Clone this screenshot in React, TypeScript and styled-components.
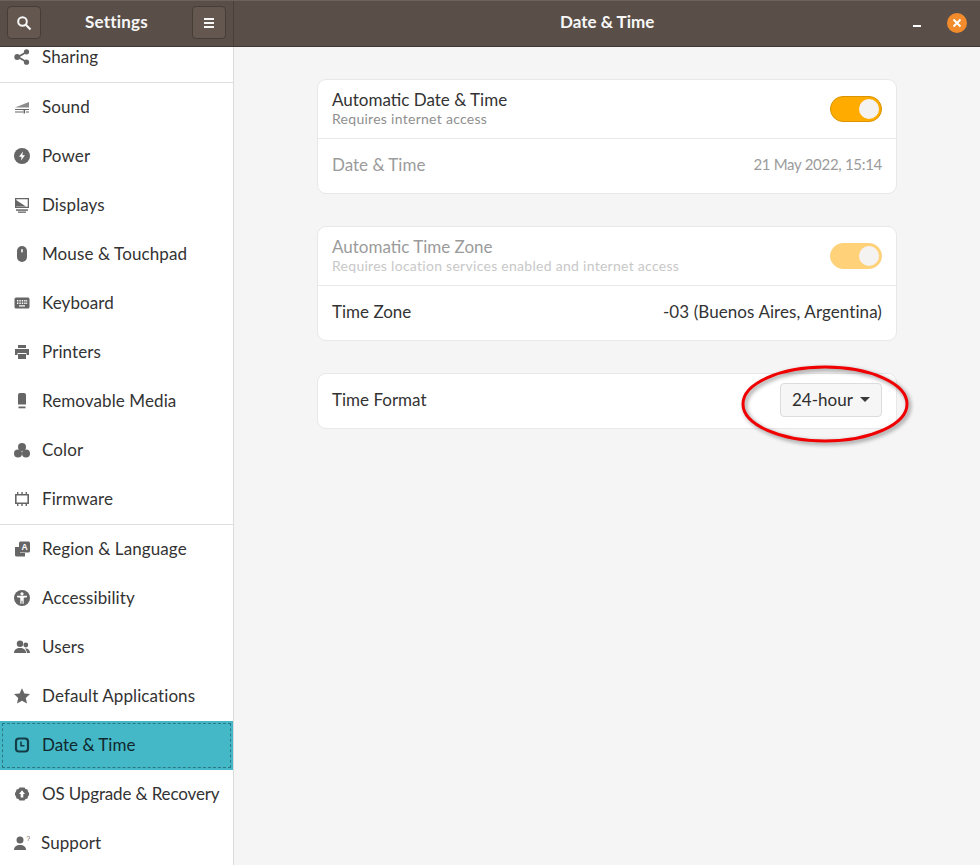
import React from "react";
import styled, { createGlobalStyle } from "styled-components";

const FONT = `"Lato", "Noto Sans", sans-serif`;
const ICON = "#666666";

const GlobalStyle = createGlobalStyle`
  html, body {
    margin: 0;
    padding: 0;
    height: 100%;
    overflow: hidden;
    background: #f5f5f5;
  }
  * {
    box-sizing: border-box;
  }
`;

const Window = styled.div`
  width: 980px;
  height: 865px;
  position: relative;
  overflow: hidden;
  font-family: ${FONT};
  font-size: 17px;
  color: #2e2e2e;
  display: flex;
  flex-direction: column;
`;

const TitleBar = styled.header`
  height: 47px;
  flex: none;
  display: flex;
  background: #5a4f48;
  border-top: 1px solid #6d625b;
  border-bottom: 1px solid #3e3631;
  color: #f7f7f7;
  z-index: 2;
`;

const LeftBar = styled.div`
  width: 234px;
  flex: none;
  display: flex;
  align-items: center;
  justify-content: space-between;
  padding: 0 7px 2px 7px;
  border-right: 1px solid #4a403a;
`;

const RightBar = styled.div`
  flex: 1;
  display: flex;
  align-items: center;
  padding: 0 13px 2px 326px;
`;

const BarButton = styled.div`
  width: 34px;
  height: 33px;
  display: flex;
  align-items: center;
  justify-content: center;
  background: #63574f;
  border: 1px solid #463d37;
  border-radius: 4px;
`;

const AppTitle = styled.div`
  font-weight: 700;
  font-size: 17px;
  letter-spacing: 0.2px;
  margin-bottom: 2px;
`;

const PageTitle = styled(AppTitle)`
  width: 92px;
  white-space: nowrap;
  letter-spacing: 0;
`;

const Minimize = styled.div`
  width: 8px;
  height: 2px;
  background: #fff;
  margin-left: auto;
  margin-right: 26px;
  margin-top: 7px;
`;

const CloseButton = styled.div`
  width: 20px;
  height: 20px;
  border-radius: 50%;
  background: #f28b2c;
  display: flex;
  align-items: center;
  justify-content: center;
`;

const Body = styled.div`
  flex: 1;
  display: flex;
  min-height: 0;
`;

const Sidebar = styled.nav`
  width: 234px;
  flex: none;
  background: #ffffff;
  border-right: 1px solid #dcdcdc;
  overflow: hidden;
`;

const SideList = styled.div`
  margin-top: -14px;
`;

const Row = styled.div<{ $active?: boolean; $gap?: number; $spacing?: number }>`
  height: 49px;
  display: flex;
  align-items: center;
  gap: ${(p) => p.$gap ?? 12}px;
  padding: 0 0 2px 14px;
  white-space: nowrap;
  letter-spacing: ${(p) => p.$spacing ?? 0.1}px;
  color: ${(p) => (p.$active ? "#10282e" : "#333333")};
  background: ${(p) => (p.$active ? "#45b8c7" : "transparent")};
  ${(p) =>
    p.$active &&
    `
    outline: 1px dashed #2a7885;
    outline-offset: -3px;
  `}
`;

const Separator = styled.div`
  height: 1px;
  background: #dedede;
`;

const Main = styled.main`
  flex: 1;
  background: #f5f5f5;
  padding: 32px 83px 0 83px;
  display: flex;
  flex-direction: column;
  gap: 32px;
`;

const Card = styled.section`
  background: #ffffff;
  border: 1px solid #e8e8e8;
  border-radius: 9px;
`;

const CardRow = styled.div<{ $h: number; $line?: boolean }>`
  height: ${(p) => p.$h}px;
  display: flex;
  align-items: center;
  justify-content: space-between;
  padding: 0 14px;
  border-top: ${(p) => (p.$line ? "1px solid #e8e8e8" : "none")};
`;

const Label = styled.div<{ $dim?: boolean; $lift?: number }>`
  color: ${(p) => (p.$dim ? "#9b9b9b" : "#333333")};
  margin-bottom: ${(p) => p.$lift ?? 0}px;
`;

const StackLabel = styled.div`
  display: flex;
  flex-direction: column;
  line-height: 20px;
  margin-bottom: 2px;
`;

const Sub = styled.div<{ $dim?: boolean }>`
  font-size: 14px;
  line-height: 17px;
  letter-spacing: 0.28px;
  color: ${(p) => (p.$dim ? "#c8c8c8" : "#8f8f8f")};
`;

const Value = styled.div<{ $dim?: boolean }>`
  letter-spacing: ${(p) => (p.$dim ? "-0.3px" : "0.08px")};
  font-size: ${(p) => (p.$dim ? "15px" : "17px")};
  color: ${(p) => (p.$dim ? "#9b9b9b" : "#333333")};
  margin-bottom: 4px;
`;

const Switch = styled.div<{ $dim?: boolean }>`
  width: 52px;
  height: 26px;
  border-radius: 13px;
  background: ${(p) => (p.$dim ? "#ffd27a" : "#ffab00")};
  border: 1px solid ${(p) => (p.$dim ? "#ffd27a" : "#d99400")};
  display: flex;
  align-items: center;
  justify-content: flex-end;
  padding-right: 2px;
`;

const Knob = styled.div`
  width: 20px;
  height: 20px;
  border-radius: 50%;
  background: #f5f3f2;
`;

const Dropdown = styled.div`
  width: 102px;
  height: 34px;
  display: flex;
  align-items: center;
  gap: 7px;
  padding-left: 11px;
  border: 1px solid #dcdcdc;
  border-radius: 4px;
  background: #f6f6f6;
  white-space: nowrap;
  margin-bottom: 3px;
`;

const Caret = styled.div`
  width: 0;
  height: 0;
  border-left: 5px solid transparent;
  border-right: 5px solid transparent;
  border-top: 5px solid #3a3a3a;
`;

const Annotation = styled.svg`
  position: absolute;
  left: 736px;
  top: 360px;
  pointer-events: none;
  filter: drop-shadow(2px 2px 2px rgba(0, 0, 0, 0.45));
`;

type IconProps = { color?: string };

const Svg = ({ children }: { children: React.ReactNode }) => (
  <svg width="16" height="16" viewBox="0 0 16 16" style={{ flex: "none" }}>
    {children}
  </svg>
);

const icons: Record<string, (p: IconProps) => JSX.Element> = {
  sharing: ({ color = ICON }) => (
    <Svg>
      <path d="M12.5 3 4 8l8.5 5" fill="none" stroke={color} strokeWidth="1.8" />
      <circle cx="12.5" cy="2.8" r="2.6" fill={color} />
      <circle cx="3.2" cy="8" r="2.9" fill={color} />
      <circle cx="12.5" cy="13.2" r="2.6" fill={color} />
    </Svg>
  ),
  sound: ({ color = ICON }) => (
    <Svg>
      <path d="M1 8.500 15 3v5.500z" fill={color} opacity="0.75" />
      <path d="M1 10h14v1H1zM1 12.500h8v1H1zM12 12.500h3v1h-3z" fill={color} />
      <rect x="9.500" y="10" width="1.600" height="4.500" fill={color} />
    </Svg>
  ),
  power: ({ color = ICON }) => (
    <Svg>
      <circle cx="8" cy="8" r="8" fill={color} />
      <path d="M9 3.500 5 8.800h2.600L7 12.500l4-5.300H8.400z" fill="#fff" />
    </Svg>
  ),
  displays: ({ color = ICON }) => (
    <Svg>
      <path d="M1 1h14v10H1zm1.300 1.300v7.400h11.400V2.300z" fill={color} fillRule="evenodd" />
      <path d="M2 3l10 6.500H2z" fill={color} />
      <rect x="2" y="12.300" width="12" height="1.500" fill={color} />
      <rect x="4" y="14.500" width="8" height="1.300" fill={color} />
    </Svg>
  ),
  mouse: ({ color = ICON }) => (
    <Svg>
      <rect x="3" y="0" width="10" height="16" rx="5" fill={color} />
      <rect x="7.200" y="3" width="1.600" height="3.500" rx="0.800" fill="#fff" />
    </Svg>
  ),
  keyboard: ({ color = ICON }) => (
    <Svg>
      <rect x="0.500" y="2.500" width="15" height="11" rx="1.500" fill={color} />
      <path
        d="M3 5h1.400v1.400H3zM5.400 5h1.400v1.400H5.400zM7.800 5h1.400v1.400H7.800zM10.200 5h1.400v1.400h-1.400zM12.200 5h1v1.400h-1zM3 7.600h1.400V9H3zM5.400 7.600h1.400V9H5.400zM7.800 7.600h1.400V9H7.800zM10.200 7.600h1.400V9h-1.400zM12.200 7.600h1V9h-1zM5 10.200h6v1.200H5z"
        fill="#fff"
      />
    </Svg>
  ),
  printers: ({ color = ICON }) => (
    <Svg>
      <rect x="4" y="1" width="8" height="3" fill={color} />
      <path d="M1 5h14v6h-2.500V9h-9v2H1z" fill={color} />
      <rect x="4" y="10" width="8" height="5" fill={color} />
    </Svg>
  ),
  media: ({ color = ICON }) => (
    <Svg>
      <path d="M4 2a2 2 0 0 1 2-2h4a2 2 0 0 1 2 2v9.500H4z" fill={color} />
      <rect x="4.500" y="13.500" width="7" height="1.800" fill={color} />
    </Svg>
  ),
  color: ({ color = ICON }) => (
    <Svg>
      <circle cx="8" cy="5" r="4" fill={color} />
      <circle cx="4" cy="11.500" r="4" fill={color} />
      <circle cx="12" cy="11.500" r="4" fill={color} />
    </Svg>
  ),
  firmware: ({ color = ICON }) => (
    <Svg>
      <path d="M1 3h14v10H1zm1.600 1.600v6.800h10.800V4.600z" fill={color} fillRule="evenodd" />
      <path
        d="M3 1h1.400v2H3zM7.300 1h1.400v2H7.300zM11.600 1H13v2h-1.400zM3 13h1.400v2H3zM7.300 13h1.400v2H7.300zM11.600 13H13v2h-1.400z"
        fill={color}
      />
    </Svg>
  ),
  region: ({ color = ICON }) => (
    <Svg>
      <path d="M1 6h5v6h5v3.500H2.500A1.500 1.500 0 0 1 1 14z" fill={color} />
      <rect x="5" y="0.500" width="11" height="11" rx="1.500" fill={color} />
      <text
        x="10.500"
        y="9"
        fontSize="8.500"
        fontWeight="700"
        fill="#fff"
        textAnchor="middle"
        fontFamily="Liberation Sans"
      >
        A
      </text>
    </Svg>
  ),
  accessibility: ({ color = ICON }) => (
    <Svg>
      <circle cx="8" cy="8" r="8" fill={color} />
      <circle cx="8" cy="3.800" r="1.600" fill="#fff" />
      <path d="M3 5.800h10v1.400l-3.300.6v6H8.500v-3h-1v3H6.300v-6L3 7.200z" fill="#fff" />
    </Svg>
  ),
  users: ({ color = ICON }) => (
    <Svg>
      <circle cx="6" cy="4.800" r="3.200" fill={color} />
      <circle cx="11.800" cy="6" r="2.400" fill={color} />
      <path d="M0 14c0-3.500 2.500-5 6-5s6 1.500 6 5z" fill={color} />
      <path d="M12.800 14c0-2-.7-3.500-2-4.500 3-.5 5.200 1.200 5.200 4.500z" fill={color} />
    </Svg>
  ),
  star: ({ color = ICON }) => (
    <Svg>
      <path
        d="M8 .3l2.400 5.200 5.600.6-4.200 3.800 1.200 5.600L8 12.700l-5 2.800 1.200-5.600L0 6.100l5.600-.6z"
        fill={color}
      />
    </Svg>
  ),
  clock: ({ color = "#153d47" }) => (
    <Svg>
      <rect x="2" y="1.500" width="12" height="13" rx="3" fill="none" stroke={color} strokeWidth="2.200" />
      <path d="M7 4.500v4.200h3.500" fill="none" stroke={color} strokeWidth="1.600" />
    </Svg>
  ),
  upgrade: ({ color = ICON }) => (
    <Svg>
      <path d="M5.500 1.500h5l1 1.500 2 .5.500 2 1 1.500v2l-1 1.500-.5 2-2 .5-1 1.500h-5l-1-1.500-2-.5-.5-2-1-1.500v-2l1-1.500.5-2 2-.5z" fill={color} />
      <path d="M8 4.300 11 8H9.300v3.500H6.700V8H5z" fill="#fff" />
    </Svg>
  ),
  support: ({ color = ICON }) => (
    <Svg>
      <circle cx="6" cy="5" r="3.500" fill={color} />
      <path d="M0 15c0-3.500 2.500-5 6-5s6 1.500 6 5z" fill={color} />
      <text x="12.200" y="6" fontSize="7.500" fill={color} fontFamily="Liberation Sans">
        ?
      </text>
    </Svg>
  ),
};

const group1 = [
  ["sharing", "Sharing"],
  ["sound", "Sound"],
  ["power", "Power"],
  ["displays", "Displays"],
  ["mouse", "Mouse & Touchpad"],
  ["keyboard", "Keyboard"],
  ["printers", "Printers"],
  ["media", "Removable Media"],
  ["color", "Color"],
  ["firmware", "Firmware"],
];

const group2 = [
  ["region", "Region & Language"],
  ["accessibility", "Accessibility"],
  ["users", "Users"],
  ["star", "Default Applications"],
  ["clock", "Date & Time"],
  ["upgrade", "OS Upgrade & Recovery"],
  ["support", "Support"],
];

function SideRow({ icon, label }: { icon: string; label: string }) {
  const Icon = icons[icon];
  return (
    <Row
      $active={label === "Date & Time"}
      $gap={label === "Support" ? 11 : 12}
      $spacing={label === "OS Upgrade & Recovery" ? -0.15 : label === "Date & Time" ? 0 : 0.1}
    >
      <Icon />
      {label}
    </Row>
  );
}

function App() {
  return (
    <Window>
      <GlobalStyle />
      <TitleBar>
        <LeftBar>
          <BarButton>
            <svg width="16" height="16" viewBox="0 0 16 16">
              <circle cx="6.500" cy="6.500" r="4.300" fill="none" stroke="#f7f7f7" strokeWidth="2" />
              <path d="M9.800 9.800 14.500 14.500" stroke="#f7f7f7" strokeWidth="2.200" />
            </svg>
          </BarButton>
          <AppTitle>Settings</AppTitle>
          <BarButton>
            <svg width="16" height="16" viewBox="0 0 16 16">
              <path d="M3 3h10v2H3zM3 7h10v2H3zM3 11h10v2H3z" fill="#f7f7f7" />
            </svg>
          </BarButton>
        </LeftBar>
        <RightBar>
          <PageTitle>Date &amp; Time</PageTitle>
          <Minimize />
          <CloseButton>
            <svg width="10" height="10" viewBox="0 0 10 10">
              <path d="M1.500 1.500l7 7M8.500 1.500l-7 7" stroke="#fff" strokeWidth="2" />
            </svg>
          </CloseButton>
        </RightBar>
      </TitleBar>
      <Body>
        <Sidebar>
          <SideList>
            {group1.slice(0, 1).map(([i, l]) => (
              <SideRow key={l} icon={i} label={l} />
            ))}
            <Separator />
            {group1.slice(1).map(([i, l]) => (
              <SideRow key={l} icon={i} label={l} />
            ))}
            <Separator />
            {group2.map(([i, l]) => (
              <SideRow key={l} icon={i} label={l} />
            ))}
          </SideList>
        </Sidebar>
        <Main>
          <Card>
            <CardRow $h={58}>
              <StackLabel>
                <Label>Automatic Date &amp; Time</Label>
                <Sub>Requires internet access</Sub>
              </StackLabel>
              <Switch>
                <Knob />
              </Switch>
            </CardRow>
            <CardRow $h={55} $line>
              <Label $dim $lift={4}>Date &amp; Time</Label>
              <Value $dim>21 May 2022, 15:14</Value>
            </CardRow>
          </Card>
          <Card>
            <CardRow $h={58}>
              <StackLabel>
                <Label $dim>Automatic Time Zone</Label>
                <Sub $dim>Requires location services enabled and internet access</Sub>
              </StackLabel>
              <Switch $dim>
                <Knob />
              </Switch>
            </CardRow>
            <CardRow $h={55} $line>
              <Label $lift={4}>Time Zone</Label>
              <Value>-03 (Buenos Aires, Argentina)</Value>
            </CardRow>
          </Card>
          <Card>
            <CardRow $h={54}>
              <Label $lift={3}>Time Format</Label>
              <Dropdown>
                24-hour
                <Caret />
              </Dropdown>
            </CardRow>
          </Card>
        </Main>
      </Body>
      <Annotation width="180" height="92" viewBox="0 0 180 92">
        <ellipse cx="89" cy="44" rx="82" ry="37" fill="none" stroke="#f00000" strokeWidth="3" />
      </Annotation>
    </Window>
  );
}

export default App;
